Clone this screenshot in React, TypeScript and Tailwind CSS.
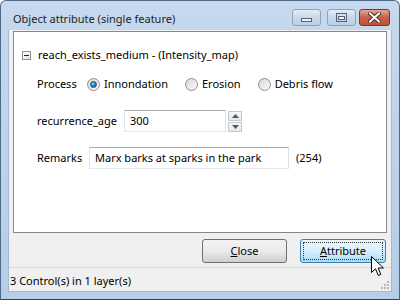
import type { ReactNode } from 'react'

function Radio({ checked, label }: { checked?: boolean; label: string }) {
  return (
    <label className="flex items-center gap-[4px]">
      <span className="relative w-[13px] h-[13px] rounded-full border border-[#8f8f8f] bg-gradient-to-br from-[#d8d8d8] to-[#fbfbfb] flex items-center justify-center">
        {checked && (
          <span className="w-[7px] h-[7px] rounded-full bg-[radial-gradient(circle_at_40%_35%,#8fd6ff_0%,#1e78b9_55%,#0d4a7e_100%)] border border-[#1a4f77]" />
        )}
      </span>
      <span>{label}</span>
    </label>
  )
}

function Input({ className = '', children }: { className?: string; children?: ReactNode }) {
  return (
    <div
      className={`h-[22px] border border-[#abadb3] bg-white flex items-center px-[5px] whitespace-nowrap ${className}`}
      style={{ borderLeftColor: '#e2e3ea', borderRightColor: '#dbdfe6', borderBottomColor: '#e3e9ef' }}
    >
      {children}
    </div>
  )
}

function CaptionButton({ kind }: { kind: 'min' | 'max' | 'close' }) {
  if (kind === 'close') {
    return (
      <div className="w-[31px] h-[17px] rounded-[3px] border border-[#6d3a3a] bg-gradient-to-b from-[#e5a898] via-[#c8604b] to-[#c94f35] flex items-center justify-center">
        <svg width="13" height="11" viewBox="0 0 13 11">
          <path d="M2 1.5 L11 9.5 M11 1.5 L2 9.5" stroke="#5a2a22" strokeWidth="4" strokeLinecap="square" />
          <path d="M2 1.5 L11 9.5 M11 1.5 L2 9.5" stroke="#ffffff" strokeWidth="2" strokeLinecap="square" />
        </svg>
      </div>
    )
  }
  return (
    <div className="w-[29px] h-[17px] rounded-[3px] border border-[#8da2bb] bg-gradient-to-b from-[#e3ecf6] via-[#c9d8e9] to-[#bccfe4] flex items-center justify-center">
      {kind === 'min' ? (
        <span className="w-[11px] h-[4px] mt-[5px] bg-[#eef2f6] border border-[#53647a]" />
      ) : (
        <span className="w-[11px] h-[9px] bg-transparent border border-[#53647a] flex items-center justify-center">
          <span className="w-[7px] h-[4px] mt-[1px] border border-[#53647a] bg-[#eef2f6]" />
        </span>
      )}
    </div>
  )
}

function Cursor() {
  return (
    <svg className="absolute left-[370px] top-[255px]" width="14" height="21" viewBox="0 0 14 21">
      <path
        d="M0.5 0.5 L0.5 16.5 L4.5 12.8 L7.3 19.5 L9.8 18.5 L7.2 12 L12.5 12 Z"
        fill="#ffffff"
        stroke="#000000"
        strokeWidth="1"
        strokeLinejoin="miter"
      />
    </svg>
  )
}

export default function App() {
  return (
    <div
      className="relative w-[400px] h-[300px] rounded-t-[6px] border border-[#4f6a88] border-b-[#244a63] bg-gradient-to-b from-[#c6d9ee] to-[#b5cde7] flex flex-col text-[11px] text-black overflow-hidden whitespace-nowrap"
      style={{ fontFamily: '"Noto Sans", "Open Sans", sans-serif' }}
    >
      {/* Title bar */}
      <div className="h-[29px] flex items-start pl-[12px] pr-[9px]">
        <span className="mt-[10px] leading-[16px] text-[#1e1e1e]">Object attribute (single feature)</span>
        <div className="ml-auto mt-[8px] flex">
          <CaptionButton kind="min" />
          <div className="ml-[6px]">
            <CaptionButton kind="max" />
          </div>
          <div className="ml-[3px]">
            <CaptionButton kind="close" />
          </div>
        </div>
      </div>

      {/* Client */}
      <div className="flex-1 mx-[7px] mb-[7px] bg-[#f0f0f0] flex flex-col border border-[#a3b7cf] border-t-0">
        {/* Tree panel */}
        <div className="mx-[4px] mt-[1px] h-[202px] bg-white border border-[#828790] pl-[8px] pt-[16px]">
          <div className="flex items-center gap-[7px] h-[14px]">
            <span className="w-[9px] h-[9px] border border-[#919191] bg-gradient-to-br from-white to-[#e0e0e0] flex items-center justify-center">
              <span className="w-[5px] h-[1px] bg-[#222]" />
            </span>
            <span>reach_exists_medium - (Intensity_map)</span>
          </div>

          <div className="pl-[15px]">
            <div className="flex items-center h-[18px] mt-[13px]">
              <span className="w-[50px]">Process</span>
              <div className="flex items-center gap-[17px]">
                <Radio checked label="Innondation" />
                <Radio label="Erosion" />
                <Radio label="Debris flow" />
              </div>
            </div>

            <div className="flex items-center mt-[17px] h-[22px]">
              <span className="w-[87px]">recurrence_age</span>
              <Input className="w-[102px]">300</Input>
              <div className="ml-[2px] flex flex-col gap-[1px]">
                <div className="w-[14px] h-[10px] border border-[#c3c8d1] bg-gradient-to-b from-[#f7f8fa] to-[#e4e7eb] flex items-center justify-center">
                  <svg width="7" height="4" viewBox="0 0 7 4">
                    <path d="M0 4 L3.5 0 L7 4 Z" fill="#4d5866" />
                  </svg>
                </div>
                <div className="w-[14px] h-[10px] border border-[#c3c8d1] bg-gradient-to-b from-[#f7f8fa] to-[#e4e7eb] flex items-center justify-center">
                  <svg width="7" height="4" viewBox="0 0 7 4">
                    <path d="M0 0 L3.5 4 L7 0 Z" fill="#4d5866" />
                  </svg>
                </div>
              </div>
            </div>

            <div className="flex items-center mt-[15px] h-[22px]">
              <span className="w-[52px]">Remarks</span>
              <Input className="w-[200px]">Marx barks at sparks in the park</Input>
              <span className="ml-[7px]">(254)</span>
            </div>
          </div>
        </div>

        {/* Buttons */}
        <div className="flex justify-end gap-[13px] pr-[5px] mt-[6px]">
          <button className="w-[85px] h-[24px] rounded-[3px] border border-[#707070] bg-gradient-to-b from-[#f2f2f2] via-[#ebebeb] to-[#cfcfcf] flex items-center justify-center">
            <span><span className="underline">C</span>lose</span>
          </button>
          <button className="w-[86px] h-[24px] rounded-[3px] border border-[#3c7fb1] bg-gradient-to-b from-[#eaf6fd] via-[#d9f0fc] to-[#a7d9f5] p-[2px]">
            <span className="w-full h-full border border-dotted border-[#333] flex items-center justify-center">
              <span><span className="underline">A</span>ttribute</span>
            </span>
          </button>
        </div>

        {/* Status bar */}
        <div className="mt-[4px] flex-1 border-t border-[#d7d7d7] flex items-center pl-[1px] pt-[3px] relative">
          <span>3 Control(s) in 1 layer(s)</span>
          <svg className="absolute right-[2px] bottom-[2px]" width="10" height="10" viewBox="0 0 10 10">
            {[[8, 0], [8, 3], [5, 3], [8, 6], [5, 6], [2, 6]].map(([x, y], i) => (
              <rect key={i} x={x} y={y + 2} width="2" height="2" fill="#b8b8b8" />
            ))}
          </svg>
        </div>
      </div>

      <Cursor />
    </div>
  )
}
